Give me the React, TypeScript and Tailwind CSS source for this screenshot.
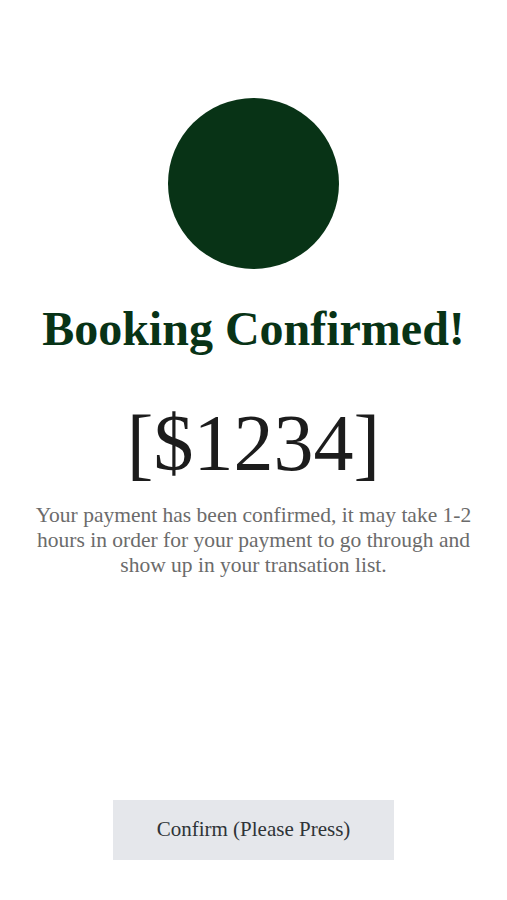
import { FC } from 'react';

const App: FC = () => {
  return (
    <main className="min-h-screen bg-white flex flex-col items-center px-6 pt-[98px] pb-10 font-['Liberation_Serif',serif]">
      {/* success badge */}
      <div className="w-[171px] h-[171px] rounded-full bg-[#083316]" />

      <h1 className="mt-[32px] text-[48px] leading-[56px] font-bold text-[#083316] text-center">
        Booking Confirmed!
      </h1>

      <div className="mt-[41px] text-[80px] leading-[90px] text-[#1c1c1c] text-center">
        [$1234]
      </div>

      <p className="mt-[15px] max-w-[455px] text-[21.5px] leading-[25px] text-[#6b6b6b] text-center">
        Your payment has been confirmed, it may take 1-2 hours in order for your payment to go through and show up in your transation list.
      </p>

      <button className="mt-auto w-[281px] h-[60px] bg-[#e5e7eb] text-[21px] text-[#2f3437]">
        Confirm (Please Press)
      </button>
    </main>
  );
};

export default App;
